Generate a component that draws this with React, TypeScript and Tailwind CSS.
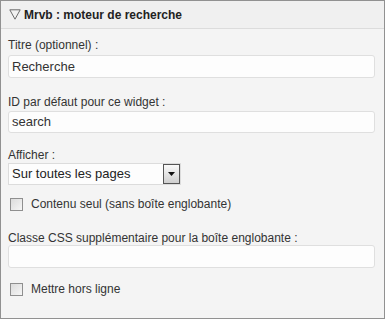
function Checkbox() {
  return (
    <span className="inline-block w-[13px] h-[13px] border border-[#8f8f8f] bg-gradient-to-br from-[#dcdcdc] to-[#f6f6f6] shrink-0" />
  );
}

function TextField({ value }: { value?: string }) {
  return (
    <div className="mt-[3px] h-[23px] rounded-[3px] border border-[#dfdfdf] bg-[#fdfdfd] pl-[3px] flex items-center text-[13px] text-[#333]">
      {value}
    </div>
  );
}

export default function App() {
  return (
    <div className="w-[386px] h-[320px] bg-white" style={{ fontFamily: '"Liberation Sans", Arial, sans-serif' }}>
      <div className="w-[385px] h-[319px] border border-[#919191] bg-[#f4f4f4]">
        <div className="h-[28px] bg-[#f0f0f0] border-b border-[#dcdcdc] flex items-center pl-[8px]">
          <svg width="12" height="11" viewBox="0 0 12 11" className="mr-[3px]">
            <path d="M0.8 0.8 H11.2 L6 10.2 Z" fill="none" stroke="#6a6a6a" strokeWidth="1" />
          </svg>
          <span className="text-[12px] font-bold text-[#222]">Mrvb : moteur de recherche</span>
        </div>
        <div className="pl-[7px] pr-[9px] pt-[9px] text-[12px] text-[#333] leading-[14px]">
          <div>Titre (optionnel) :</div>
          <TextField value="Recherche" />
          <div className="mt-[17px]">ID par défaut pour ce widget :</div>
          <div className="mt-[2px] h-[22px] rounded-[3px] border border-[#dfdfdf] bg-[#fdfdfd] pl-[3px] flex items-center text-[13px] text-[#333]">
            search
          </div>
          <div className="mt-[15px]">Afficher :</div>
          <div className="mt-[1px] w-[173px] h-[22px] border border-[#dcdcdc] bg-[#fdfdfd] flex items-center justify-between pl-[3px] pr-0 text-[13px] text-[#222]">
            <span>Sur toutes les pages</span>
            <span className="w-[17px] h-[20px] border border-[#555] bg-gradient-to-b from-[#fafafa] to-[#cfcfcf] flex items-center justify-center">
              <svg width="7" height="4" viewBox="0 0 7 4">
                <path d="M0 0 H7 L3.5 4 Z" fill="#111" />
              </svg>
            </span>
          </div>
          <div className="mt-[12px] flex items-center pl-[2px] gap-[8px]">
            <Checkbox />
            <span className="text-[12px] text-[#333]">Contenu seul (sans boîte englobante)</span>
          </div>
          <div className="mt-[20px]">Classe CSS supplémentaire pour la boîte englobante :</div>
          <div className="h-[23px] mt-0 rounded-[3px] border border-[#dfdfdf] bg-[#fdfdfd]" />
          <div className="mt-[14px] flex items-center pl-[2px] gap-[8px]">
            <Checkbox />
            <span className="text-[12px] text-[#333]">Mettre hors ligne</span>
          </div>
        </div>
      </div>
    </div>
  );
}
